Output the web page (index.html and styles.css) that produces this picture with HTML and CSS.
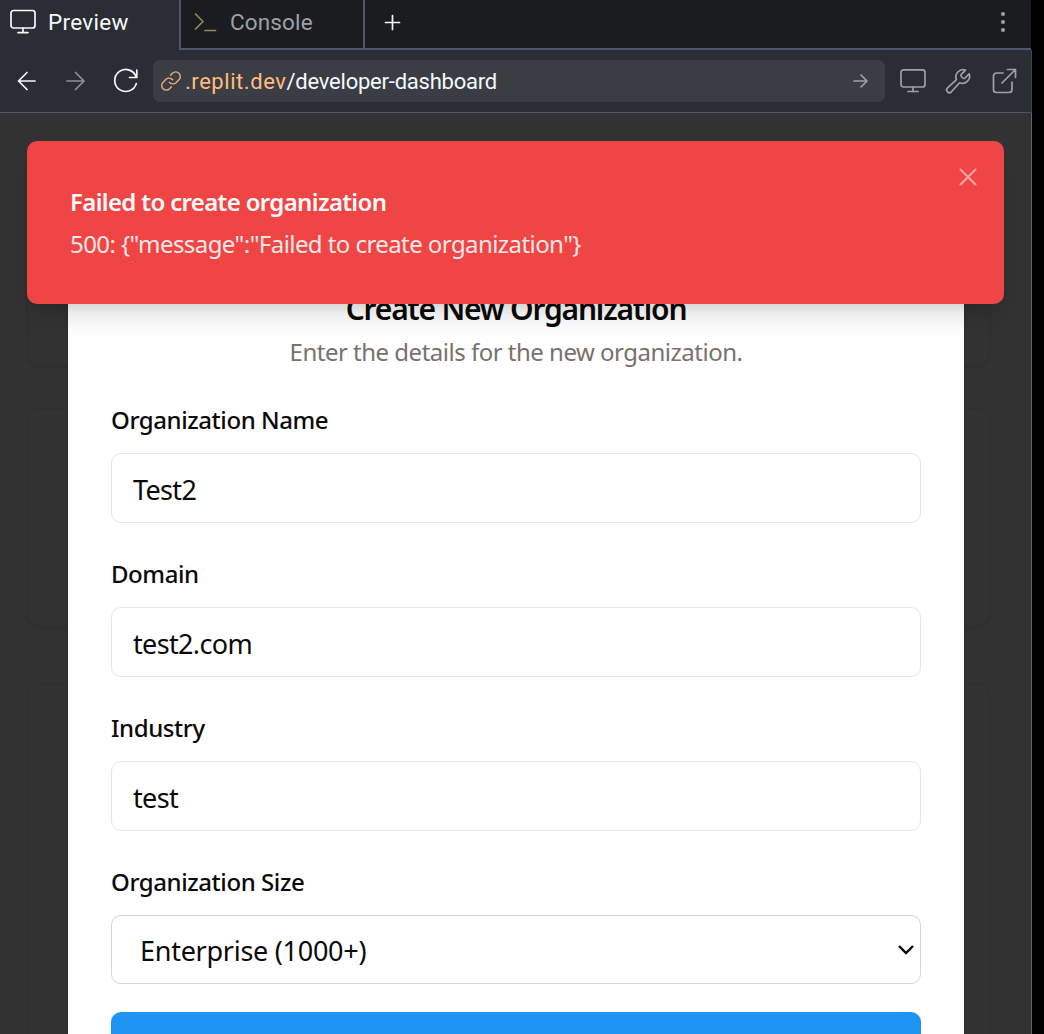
FILE: index.html
```html
<!DOCTYPE html>
<html lang="en">
<head>
<meta charset="utf-8">
<title>Developer Dashboard</title>
<link rel="stylesheet" href="styles.css">
</head>
<body>
<div class="pane">
  <header class="tabs">
    <div class="tab tab-active">
      <svg class="icon" width="28" height="28" viewBox="0 0 28 28"><rect x="2" y="2.500" width="24" height="17.500" rx="2.500"/><path d="M14 20v4.300M9 24.600h10"/></svg>
      <span class="tab-preview">Preview</span>
    </div>
    <div class="tab tab-console">
      <svg class="icon" width="24" height="24" viewBox="0 0 24 24"><path d="M2.500 4l7.500 7.500L2.500 19M12 20.500h10.500"/></svg>
      <span>Console</span>
    </div>
    <div class="tab-add"><svg class="icon" width="18" height="18" viewBox="0 0 18 18"><path d="M9.500 1.500v14M2.500 8.500h14"/></svg></div>
    <div class="tab-menu"><i></i><i></i><i></i></div>
  </header>
  <nav class="toolbar">
    <svg class="icon back" width="20" height="20" viewBox="0 0 20 20"><path d="M18 10H1.500M10 1.500L1.500 10l8.500 8.500"/></svg>
    <svg class="icon forward" width="20" height="20" viewBox="0 0 20 20"><path d="M1 10h17M9.500 1.500L18 10l-8.500 8.500"/></svg>
    <svg class="icon reload" width="28" height="28" viewBox="0 0 28 28"><path d="M25.800 3.200v7.300h-7.300M25 9.500a11 11 0 1 0 .3 7"/></svg>
    <div class="address">
      <svg class="icon link" width="20" height="20" viewBox="0 0 24 24"><path d="M10 13.500a5.500 5.500 0 0 0 8 .5l3.500-3.500a5.500 5.500 0 0 0-7.800-7.800L11.500 5M14 10.500a5.500 5.500 0 0 0-8-.5l-3.500 3.500a5.500 5.500 0 0 0 7.800 7.800l2.200-2.300"/></svg>
      <span class="url"><span class="host">.replit.dev</span><span class="path">/developer-dashboard</span></span>
      <svg class="icon go" width="16" height="16" viewBox="0 0 16 16"><path d="M1 8h13M8 2l6 6-6 6"/></svg>
    </div>
    <div class="tools">
      <svg class="icon" width="28" height="28" viewBox="0 0 28 28"><rect x="2" y="2.800" width="24" height="17.200" rx="2.500"/><path d="M14 20v4.300M9 24.500h10"/></svg>
      <svg class="icon" width="28" height="28" viewBox="0 0 28 28"><path d="M17.300 7.300a1.600 1.600 0 0 0 0 2.200l1.500 1.500a1.600 1.600 0 0 0 2.200 0l4.200-4.200a7.200 7.200 0 0 1-9.600 9L7.400 24.800a2.700 2.700 0 0 1-3.900-3.900l9-8.200a7.200 7.200 0 0 1 9-9.600z"/></svg>
      <svg class="icon" width="28" height="28" viewBox="0 0 28 28"><path d="M13 6H6.500A3 3 0 0 0 3.500 9v13.500a3 3 0 0 0 3 3H19a3 3 0 0 0 3-3V15M17.500 2.500h8v8M25.500 2.500L12 16"/></svg>
    </div>
  </nav>
  <main class="viewport">
    <div class="dashboard">
      <section class="panel panel-top"></section>
      <section class="panel panel-middle"></section>
      <section class="panel panel-bottom"></section>
    </div>
    <form class="dialog">
      <h2>Create New Organization</h2>
      <p class="description">Enter the details for the new organization.</p>
      <div class="field"><label>Organization Name</label><div class="input">Test2</div></div>
      <div class="field"><label>Domain</label><div class="input">test2.com</div></div>
      <div class="field"><label>Industry</label><div class="input">test</div></div>
      <div class="field"><label>Organization Size</label><div class="input select"><span>Enterprise (1000+)</span><svg class="chevron" width="18" height="12" viewBox="0 0 18 12"><path d="M2 2l7 7 7-7"/></svg></div></div>
      <div class="submit"></div>
    </form>
    <aside class="toast">
      <div class="toast-title">Failed to create organization</div>
      <div class="toast-text">500: {"message":"Failed to create organization"}</div>
      <svg class="close" width="20" height="20" viewBox="0 0 20 20"><path d="M2.500 2.500l15 15M17.500 2.500l-15 15"/></svg>
    </aside>
  </main>
</div>
</body>
</html>
```
FILE: styles.css
```css
* { box-sizing: border-box; }
body { margin: 0; background: #000; font-family: "Noto Sans", "Open Sans", sans-serif; color: #0c0a09; }
.pane { width: 1032px; height: 1034px; display: flex; flex-direction: column; overflow: hidden; }
.icon { fill: none; stroke: currentColor; stroke-width: 1.700; stroke-linecap: round; stroke-linejoin: round; flex: none; }

.tabs { width: 1031px; height: 50px; display: flex; flex: none; background: #1b1c20; color: #f5f9fc; font: 22.500px/44px Roboto, sans-serif; }
.tab { display: flex; height: 50px; }
.tab-active { width: 179px; background: #2b2d35; padding-left: 9px; gap: 11px; }
.tab-active svg { margin-top: 8px; }
.tab-preview { letter-spacing: .300px; }
.tab-console { width: 186px; border: solid #50556d; border-width: 0 2px 2px; padding-left: 12px; gap: 13px; color: #9da2a6; letter-spacing: .150px; }
.tab-console svg { color: #928761; margin-top: 10px; }
.tab-add { flex: 1; border-bottom: 2px solid #50556d; padding: 14px 0 0 18px; line-height: 0; }
.tab-menu { width: 56px; border-bottom: 2px solid #50556d; display: flex; flex-direction: column; align-items: center; gap: 4px; padding-top: 12px; }
.tab-menu i { width: 4px; height: 4px; border-radius: 50%; background: #9da2a6; }

.toolbar { height: 63px; flex: none; display: flex; align-items: center; background: #2b2d35; border-bottom: 1px solid #50556d; border-right: 1px solid #41444e; color: #f5f9fc; padding-left: 17px; }
.forward { color: #8d9094; margin-left: 29px; }
.reload { margin-left: 25px; }
.address { width: 732px; height: 42px; margin-left: 14px; border-radius: 7px; background: #3b3d44; display: flex; align-items: center; padding: 0 16px 0 8px; }
.link { color: #e9ac74; }
.url { flex: 1; margin-left: 4px; padding-top: 2px; font: 22px/42px Roboto, sans-serif; white-space: nowrap; }
.host { color: #ffbe80; letter-spacing: .550px; }
.path { letter-spacing: -.220px; }
.go { color: #9da2a6; }
.tools { display: flex; gap: 17.500px; margin-left: 13.500px; color: #9da2a6; }

.viewport { position: relative; flex: 1; overflow: hidden; background: #323232; border-right: 1px solid #646464; }
.dashboard { width: 963px; margin-left: 27px; display: flex; flex-direction: column; }
.panel { border: 1px solid #2e2e2e; border-radius: 14px; box-shadow: 0 2px 3px rgba(0, 0, 0, .060); }
.panel-top { height: 225px; margin-top: 28px; }
.panel-middle { height: 219px; margin-top: 42px; }
.panel-bottom { height: 400px; margin-top: 56px; }

.dialog { position: absolute; left: 68px; top: 130px; width: 896px; height: 1000px; padding: 48px 43px 0; background: #fff; box-shadow: 0 0 2px rgba(0, 0, 0, .300); }
.dialog h2 { margin: 0; text-align: center; font-size: 30px; line-height: 36px; font-weight: 600; letter-spacing: -1.200px; }
.description { margin: 7px 0 0; text-align: center; color: #78716c; font-size: 24px; line-height: 36px; letter-spacing: -.500px; }
.field { margin-bottom: 37px; display: flex; flex-direction: column; gap: 19px; }
.description + .field { margin-top: 36px; }
.field label { font-size: 24px; line-height: 28px; font-weight: 500; letter-spacing: -.430px; white-space: nowrap; }
.input { height: 70px; border: 1px solid #e5e5e5; border-radius: 10px; padding: 1px 21px 0; font-size: 27px; line-height: 70px; letter-spacing: -.650px; }
.select { height: 69px; border-color: #d1d5db; display: flex; align-items: center; justify-content: space-between; padding: 2px 5px 0 28px; letter-spacing: -.270px; }
.chevron { fill: none; stroke: #0c0a09; stroke-width: 2.400; margin-top: -2px; }
.field:has(.select) { margin-bottom: 28px; }
.submit { height: 71px; background: #2094f3; border-radius: 10px; }

.toast { position: absolute; left: 27px; top: 28px; width: 977px; height: 163px; padding: 43px; border-radius: 10px; background: #f04545; color: #fafafa; box-shadow: 0 18px 26px -5px rgba(0, 0, 0, .120), 0 7px 11px -7px rgba(0, 0, 0, .120); white-space: nowrap; }
.toast-title { font-size: 24px; line-height: 36px; font-weight: 600; letter-spacing: -.650px; }
.toast-text { margin-top: 7px; font-size: 24px; line-height: 34px; letter-spacing: -.570px; opacity: .900; }
.close { position: absolute; right: 26px; top: 26px; fill: none; stroke: #fca5a5; stroke-width: 2; stroke-linecap: round; }
```
